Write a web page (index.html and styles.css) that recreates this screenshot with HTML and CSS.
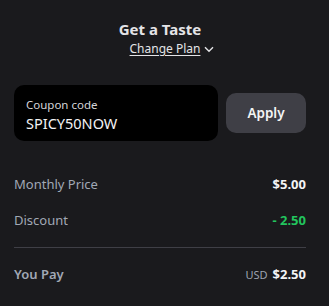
FILE: index.html
```html
<!DOCTYPE html>
<html>
<head>
<meta charset="utf-8">
<link rel="stylesheet" href="styles.css">
</head>
<body>
<div class="panel">
  <header class="head">
    <h1 class="title">Get a Taste</h1>
    <a class="change"><span class="change-text">Change Plan</span><svg class="chev" width="10" height="7" viewBox="0 0 10 7"><path d="M1 1.2 L5 5.2 L9 1.2" fill="none" stroke="#e4e4e7" stroke-width="1.4"/></svg></a>
  </header>
  <div class="coupon">
    <div class="field">
      <div class="label">Coupon code</div>
      <div class="value">SPICY50NOW</div>
    </div>
    <button class="apply">Apply</button>
  </div>
  <div class="rows">
    <div class="row"><span class="k">Monthly Price</span><span class="v">$5.00</span></div>
    <div class="row"><span class="k">Discount</span><span class="v green">- 2.50</span></div>
  </div>
  <div class="total">
    <span class="k strong">You Pay</span>
    <span class="amt"><span class="cur">USD</span><span class="v">$2.50</span></span>
  </div>
</div>
</body>
</html>
```
FILE: styles.css
```css
html, body {
  margin: 0;
  background: #1a1a1d;
}
body {
  font-family: "Noto Sans", "Open Sans", sans-serif;
  color: #e4e4e7;
}
.panel {
  padding: 18px 23px 0 14px;
}
.head {
  display: flex;
  flex-direction: column;
  align-items: center;
}
.title {
  margin: 0;
  font-size: 15px;
  font-weight: 700;
  line-height: 22px;
  color: #e4e4e7;
}
.change {
  margin-left: 24px;
  font-size: 12px;
  line-height: 18px;
  color: #e4e4e7;
  display: flex;
  align-items: center;
  gap: 4px;
}
.change-text {
  text-decoration: underline;
  text-underline-offset: 2px;
}
.chev {
  display: block;
  margin-top: 1px;
}
.coupon {
  margin-top: 27px;
  display: flex;
  align-items: center;
  gap: 8px;
}
.field {
  width: 204px;
  height: 56px;
  box-sizing: border-box;
  background: #000;
  border-radius: 10px;
  padding: 11px 12px 0;
}
.label {
  font-size: 11.5px;
  line-height: 17px;
  color: #d4d4d8;
}
.value {
  font-size: 14.5px;
  line-height: 20px;
  color: #f4f4f5;
}
.apply {
  width: 80px;
  height: 40px;
  border: 0;
  border-radius: 10px;
  background: #3f3f46;
  color: #f4f4f5;
  font-family: inherit;
  font-size: 13.5px;
  font-weight: 600;
}
.rows {
  margin-top: 34px;
  display: flex;
  flex-direction: column;
  gap: 17px;
  padding-bottom: 17px;
  border-bottom: 1px solid #3f3f46;
}
.row, .total {
  display: flex;
  justify-content: space-between;
  align-items: center;
  line-height: 19px;
}
.k {
  font-size: 13px;
  color: #a1a8b5;
}
.strong {
  font-weight: 600;
}
.v {
  font-size: 13px;
  font-weight: 700;
  color: #f4f4f5;
}
.green {
  color: #22c55e;
}
.total {
  margin-top: 17px;
}
.amt {
  display: flex;
  align-items: baseline;
  gap: 5px;
}
.cur {
  font-size: 11px;
  color: #9ca3af;
}
```
